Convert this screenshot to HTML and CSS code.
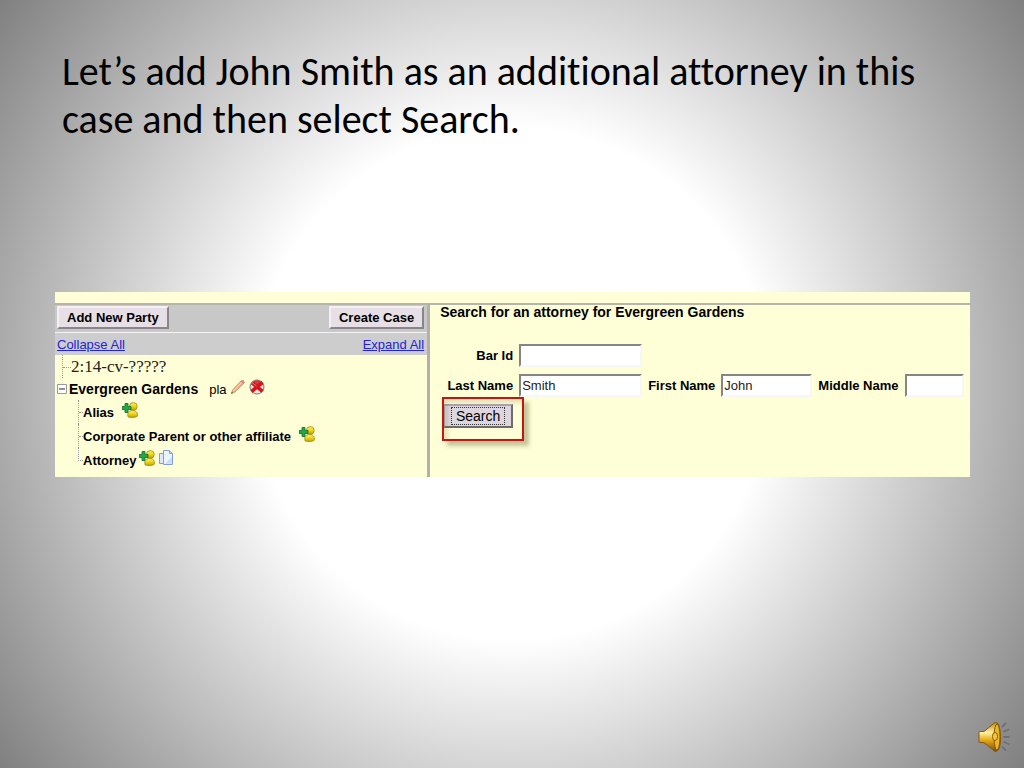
FILE: index.html
```html
<!DOCTYPE html>
<html lang="en">
<head>
<meta charset="utf-8">
<title>Adding an attorney</title>
<link rel="stylesheet" href="styles.css">
</head>
<body>
<svg class="symbols" aria-hidden="true">
  <defs>
    <linearGradient id="gold" x1="0" y1="0" x2="0" y2="1">
      <stop offset="0" stop-color="#fff36a"/><stop offset=".5" stop-color="#ecd414"/><stop offset="1" stop-color="#b8a008"/>
    </linearGradient>
    <linearGradient id="brass" x1="0" y1="0" x2="0" y2="1">
      <stop offset="0" stop-color="#c08a10"/><stop offset=".35" stop-color="#fff0a0"/><stop offset=".6" stop-color="#e8ac18"/><stop offset="1" stop-color="#7a4c00"/>
    </linearGradient>
    <symbol id="add-person" viewBox="0 0 16 16">
      <path d="M6 14.800c-1-4 1-6.300 4.500-6.300s5.500 2.300 4.800 5.800c-2 1.500-7.300 1.700-9.300.5z" fill="url(#gold)" stroke="#a08a10" stroke-width=".8"/>
      <circle cx="11.300" cy="4.500" r="3.900" fill="url(#gold)" stroke="#a08a10" stroke-width=".8"/>
      <path d="M3 1.500h3v3h3v3H6v3H3v-3H0v-3h3z" fill="#27a844" stroke="#0d6b32" stroke-width=".8"/>
    </symbol>
  </defs>
</svg>
<main class="slide">
  <h1 class="title">Let’s add John Smith as an additional attorney in this case and then select Search.</h1>

  <section class="panel">
    <div class="party-pane">
      <div class="toolbar">
        <button class="tool-button" type="button">Add New Party</button>
        <button class="tool-button" type="button">Create Case</button>
      </div>
      <nav class="tree-links">
        <a href="#">Collapse All</a>
        <a href="#">Expand All</a>
      </nav>
      <ul class="tree">
        <li class="case-row"><span class="branch"></span>2:14-cv-?????</li>
        <li>
          <div class="party-row">
            <button class="toggle" type="button" aria-label="Collapse">
              <svg width="10" height="10" viewBox="0 0 10 10"><path d="M.5.5h9v9h-9z" fill="#fff" stroke="#999"/><path d="M2 5h6" stroke="#222"/></svg>
            </button>
            <span class="party-name">Evergreen Gardens</span>
            <span class="role">pla</span>
            <svg class="icon raised spaced" viewBox="0 0 16 16"><path d="M1.500 14.500l1-3.500L11.500 1.500l3 2L5 13z" fill="#efb17c" stroke="#b98460" stroke-width=".7"/><path d="M3.500 12L12.500 2.500" stroke="#fbe0b8"/><path d="M11.500 1.500q2.500-1.500 3 2l-1 1.200-3-2z" fill="#df8585"/><path d="M1.300 14.700l.5-1.700 1.200 1z" fill="#333"/></svg>
            <svg class="icon raised spaced" viewBox="0 0 16 16"><circle cx="8" cy="8" r="7" fill="#e4e4e8" stroke="#77777b"/><path d="M3.500 3C6 .8 10 .8 12.500 3L8 7z" fill="#c9403a"/><path d="M3 3.800l10.500 8.500M13.500 3.500L2.500 12.500" stroke="#d81414" stroke-width="3.600"/><path d="M3 3.500l4.500 3.500" stroke="#f37a70"/></svg>
          </div>
          <ul class="subtree">
            <li><span class="branch"></span>Alias<svg class="icon raised apart"><use href="#add-person"/></svg></li>
            <li><span class="branch"></span>Corporate Parent or other affiliate<svg class="icon raised apart"><use href="#add-person"/></svg></li>
            <li><span class="branch"></span>Attorney<svg class="icon raised spaced"><use href="#add-person"/></svg><svg class="icon raised spaced" viewBox="0 0 16 16"><path d="M1.500 3.500h7v10h-7z" fill="#dfe9fb" stroke="#7f9fd8"/><path d="M5.500.5h6l3 3v11h-9z" fill="#eef4ff" stroke="#7f9fd8"/><path d="M11.500.5v3h3" fill="#c5d7f5" stroke="#7f9fd8"/><path d="M7 13.500h7V7z" fill="#c8daf7"/></svg></li>
          </ul>
        </li>
      </ul>
    </div>

    <form class="search-pane">
      <h2 class="search-title">Search for an attorney for Evergreen Gardens</h2>
      <div class="field-row">
        <label class="first-label" for="bar">Bar Id</label>
        <input class="wide" id="bar" type="text">
      </div>
      <div class="field-row">
        <label class="first-label" for="last">Last Name</label>
        <input class="wide" id="last" type="text" value="Smith">
        <label for="first">First Name</label>
        <input class="medium" id="first" type="text" value="John">
        <label for="middle">Middle Name</label>
        <input class="small" id="middle" type="text">
      </div>
      <div class="action">
        <button class="search-button" type="button"><span>Search</span></button>
        <div class="highlight"></div>
      </div>
    </form>
  </section>

  <button class="sound" type="button" aria-label="Play sound">
    <svg width="32" height="32" viewBox="0 0 32 32">
      <path d="M1 11.500q0-1 1-1h4L17 1.500q5-1 5.500 14T17 30.500L6 21.500H2q-1 0-1-1z" fill="url(#brass)" stroke="#865807"/>
      <ellipse cx="19" cy="16" rx="3" ry="13" fill="#e9b52c" stroke="#84560a"/>
      <ellipse cx="17" cy="15.500" rx="2.500" ry="4" fill="#f3c944" stroke="#8a5c08"/>
      <g stroke="#6d7079" stroke-width="1.800" stroke-linecap="round"><path d="M24.500 5.500l3-3M26 10.500l4.500-2M26 16h5M26 21l4.500 2M24.500 26l3 3"/></g>
    </svg>
  </button>
</main>
</body>
</html>
```
FILE: styles.css
```css
* { box-sizing: border-box; }

body {
  margin: 0;
  font-family: "Liberation Sans", Arial, sans-serif;
  font-size: 13px;
  color: #000;
}

ul { margin: 0; padding: 0; list-style: none; }
button { font: inherit; color: inherit; }
.symbols { position: absolute; width: 0; height: 0; }

.slide {
  position: relative;
  min-height: 100vh;
  padding: 48px 54px 0 55px;
  background: radial-gradient(circle farthest-corner at center, #fff 40%, #808080 100%);
}

.title {
  margin: 0 0 148px;
  padding: 0 7px;
  font-family: Carlito, Lato, sans-serif;
  font-size: 40px;
  font-weight: 400;
  font-variant-ligatures: none;
  line-height: 48px;
}

.panel {
  display: grid;
  grid-template-columns: 41% 1fr;
  min-height: 185px;
  border-top: 11px solid #ffffd7;
  background: #ffffd7;
}

.party-pane {
  border-top: 2px solid #b5b5ac;
  border-right: 3px solid #b1b1aa;
}

.toolbar {
  display: flex;
  justify-content: space-between;
  padding: 1px 3px 3px 2px;
  background: #c8c8c8;
  border-bottom: 1px solid #f4f4f4;
}

.tool-button {
  height: 23px;
  padding: 0 8px;
  border: 2px solid;
  border-color: #f6f0f4 #8b858b #8b858b #f6f0f4;
  background: #e6dfe6;
  font-weight: 700;
}

.tree-links {
  display: flex;
  justify-content: space-between;
  padding: 1px 3px 0 2px;
  background: #cdcdcd;
  line-height: 21px;
}

.tree-links a { color: #2222dd; }

.case-row {
  display: flex;
  align-items: center;
  height: 23px;
  padding-left: 7px;
  font-family: "Liberation Serif", serif;
  font-size: 17px;
  color: #222;
}

.branch {
  align-self: stretch;
  width: 9px;
  border-left: 1px dotted #999;
}

.branch::before {
  content: "";
  display: block;
  height: 50%;
  border-bottom: 1px dotted #999;
}

.party-row {
  display: flex;
  align-items: center;
  height: 22px;
  padding-left: 2px;
}

.toggle { display: flex; padding: 0; border: 0; background: none; }
.party-name { margin: 0 11px 0 2px; font-size: 14px; font-weight: 700; }
.icon { width: 16px; height: 16px; fill: none; }
.raised { margin-bottom: 4px; }
.spaced { margin-left: 3px; }
.apart { margin-left: 8px; }

.subtree li {
  display: flex;
  align-items: center;
  height: 24px;
  padding-left: 23px;
  font-weight: 700;
}

.subtree .branch { width: 5px; }
.subtree li:last-child .branch { border-left: 0; }
.subtree li:last-child .branch::before { border-left: 1px dotted #999; }

.search-pane {
  padding: 0 7px 0 10px;
  border-top: 2px solid #b5b5ac;
}

.search-title {
  margin: 0 0 24px;
  font-size: 14px;
  line-height: 15px;
}

.field-row {
  display: flex;
  align-items: center;
  gap: 6px;
  margin-bottom: 7px;
  font-weight: 700;
  white-space: nowrap;
}

.first-label { width: 73px; text-align: right; }

.field-row input {
  height: 23px;
  padding: 0 1px;
  border: 2px solid;
  border-color: #858585 #f7f7f7 #f7f7f7 #858585;
  background: #fff;
  font: 13px "Liberation Sans", Arial, sans-serif;
  color: #222;
}

.wide { width: 123px; }
.medium { width: 91px; }
.small { width: 59px; }

.action { position: relative; width: 72px; padding-left: 3px; }

.search-button {
  width: 70px;
  height: 24px;
  padding: 0 6px;
  border: 2px solid;
  border-color: #aaa4aa #6f6a6f #6f6a6f #aaa4aa;
  background: #ded6de;
  font-size: 14px;
}

.search-button span { display: block; border: 1px dotted #333; line-height: 16px; }

.highlight {
  position: absolute;
  top: -7px;
  left: 2px;
  width: 82px;
  height: 44px;
  border: 2px solid #c4160e;
  box-shadow: 5px 5px 4px rgba(110, 110, 70, .4), inset 4px 4px 4px rgba(110, 110, 70, .2);
  pointer-events: none;
}

.sound {
  position: absolute;
  right: 14px;
  bottom: 15px;
  display: flex;
  padding: 0;
  border: 0;
  background: none;
}
```
